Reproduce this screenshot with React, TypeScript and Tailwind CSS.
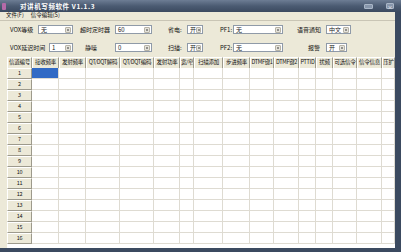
import React from 'react';

const cjk = { fontFamily: '"Noto Sans CJK SC", "Liberation Sans", sans-serif' };

const headers = [
  '接收频率', '发射频率', 'QT/DQT解码', 'QT/DQT编码', '发射功率', '宽/窄', '扫描添加', '步进频率',
  'DTMF键1', 'DTMF键2', 'PTTID', '扰频', '可选信令', '信令信息', '压扩',
];

const Select: React.FC<{ value: string; className: string }> = ({ value, className }) => (
  <div className={`flex items-center h-[9px] bg-white border border-[#8f9aa8] ${className}`}>
    <span className="flex-1 pl-[2px] text-[6px] leading-none text-[#222]">{value}</span>
    <span className="flex items-center justify-center w-[6px] h-[6px] mr-[1px] rounded-[1px] bg-[#e4e2da] border border-[#b7b3a6]">
      <span className="w-[2px] h-[2px] rounded-full border border-[#555] border-solid" />
    </span>
  </div>
);

const Label: React.FC<{ text: string; className: string }> = ({ text, className }) => (
  <div className={`text-[6px] leading-none text-[#111] whitespace-nowrap ${className}`}>{text}</div>
);

const headCell =
  'flex items-center justify-center bg-[#ece9d8] border-t border-l border-white border-r border-b border-r-[#9d9a8c] border-b-[#9d9a8c] text-[5.5px] tracking-[-0.3px] leading-none text-[#111] whitespace-nowrap overflow-hidden';

export default function App() {
  return (
    <div className="w-[401px] h-[252px] flex flex-col overflow-hidden bg-[#3b4a60]" style={cjk}>
      {/* title bar */}
      <div className="h-[12px] flex items-center bg-gradient-to-b from-[#6d7d94] via-[#4b5b72] to-[#3b4a60]">
        <div className="ml-[2px] w-[4px] h-[7px] bg-[#b46aa8] rounded-[1px]" />
        <span className="ml-[14px] text-[6.5px] font-bold text-white tracking-[0.6px] leading-none">
          对讲机写频软件 V1.1.3
        </span>
        <div className="ml-auto flex items-center gap-[13px] mr-[7px]">
          <div className="w-[9px] h-[5px] rounded-[1px] bg-[#8796ab] border border-[#a9b6c7]" />
          <div className="w-[8px] h-[6px] rounded-[1px] bg-[#8796ab] border border-[#a9b6c7] text-[5px] leading-none text-white flex items-center justify-center">×</div>
        </div>
      </div>

      <div className="flex-1 flex flex-col mr-[6px] mb-[4px] bg-[#ece9d8] min-h-0">
        {/* menu */}
        <div className="h-[9px] flex items-center gap-[7px] pl-[6px] border-b border-[#c9c5b5] text-[5.5px] leading-none text-[#111]">
          <span>文件(F)</span>
          <span>信令编辑(S)</span>
        </div>

        {/* settings */}
        <div className="pt-[4px] pl-[10px] flex flex-col gap-[9px]">
          <div className="flex items-center h-[9px]">
            <Label text="VOX等级" className="w-[28px]" />
            <Select value="无" className="w-[35px]" />
            <Label text="超时定时器" className="w-[42px] pl-[7px]" />
            <Select value="60" className="w-[37px]" />
            <Label text="省电:" className="w-[35px] pl-[16px]" />
            <Select value="开" className="w-[16px]" />
            <Label text="PF1:" className="w-[30px] pl-[17px]" />
            <Select value="无" className="w-[50px]" />
            <Label text="语音通知" className="w-[43px] pl-[14px]" />
            <Select value="中文" className="w-[25px]" />
          </div>
          <div className="flex items-center h-[9px]">
            <Label text="VOX延迟时间" className="w-[39px]" />
            <Select value="1" className="w-[24px]" />
            <Label text="静噪" className="w-[42px] pl-[12px]" />
            <Select value="0" className="w-[37px]" />
            <Label text="扫描:" className="w-[35px] pl-[16px]" />
            <Select value="开" className="w-[16px]" />
            <Label text="PF2:" className="w-[30px] pl-[17px]" />
            <Select value="无" className="w-[50px]" />
            <Label text="报警" className="w-[43px] pl-[25px]" />
            <Select value="开" className="w-[21px]" />
          </div>
        </div>

        {/* table */}
        <div className="flex-1 ml-[7px] mt-[5px] bg-white overflow-hidden min-h-0">
          <div className="grid grid-cols-[25px_27px_27px_34px_34px_26px_14px_29px_27px_24px_25px_17px_17px_24px_25px_13px] auto-rows-[11px] w-max">
            <div className={`h-[12px] ${headCell}`}>信道编号</div>
            {headers.map((h) => (
              <div key={h} className={`h-[12px] ${headCell}`}>
                {h}
              </div>
            ))}
            {Array.from({ length: 16 }, (_, r) => (
              <React.Fragment key={r}>
                <div className={headCell}>{r + 1}</div>
                {headers.map((h, c) => (
                  <div
                    key={h}
                    className={`border-r border-b border-[#dedbd2] ${r === 0 && c === 0 ? 'bg-[#316ac5]' : 'bg-white'}`}
                  />
                ))}
              </React.Fragment>
            ))}
          </div>
        </div>
      </div>
    </div>
  );
}
